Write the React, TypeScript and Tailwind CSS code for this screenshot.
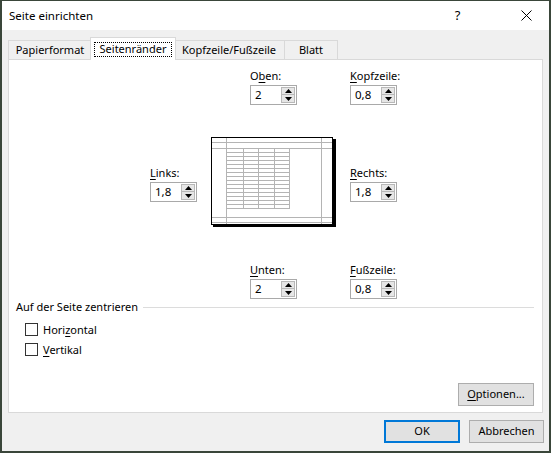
import React from "react";

const F = "font-['Noto_Sans',sans-serif]";

function Tri({ up }: { up?: boolean }) {
  return (
    <svg width="7" height="4" viewBox="0 0 7 4">
      {up ? <polygon points="0,4 7,4 3.5,0" fill="#000" /> : <polygon points="0,0 7,0 3.5,4" fill="#000" />}
    </svg>
  );
}

function Spin({ value }: { value: string }) {
  return (
    <div className="w-[47px] h-[20px] border border-[#a9a9a9] bg-white flex items-center">
      <span className="pl-[4px] text-[11.5px] leading-[14px] text-black">{value}</span>
      <div className="ml-auto mr-px h-full py-px flex flex-col">
        <div className="w-[14px] h-[8px] bg-[#e6e6e6] border border-[#b8b8b8] flex items-center justify-center">
          <Tri up />
        </div>
        <div className="w-[14px] h-[8px] bg-[#e6e6e6] border border-[#b8b8b8] border-t-0 flex items-center justify-center">
          <Tri />
        </div>
      </div>
    </div>
  );
}

function Field({ pre, u, post, value }: { pre: string; u: string; post: string; value: string }) {
  return (
    <div className="w-[47px] flex flex-col">
      <div className="h-[14px] leading-[14px] text-[11px] text-black whitespace-nowrap">
        {pre}
        <span className="underline underline-offset-2">{u}</span>
        {post}
      </div>
      <div className="mt-[2px]">
        <Spin value={value} />
      </div>
    </div>
  );
}

function Preview() {
  const rows = Array.from({ length: 16 }, (_, k) => 11.5 + 4 * k);
  const cols = [15.5, 32.5, 47.5, 63.5, 78.5];
  const g = "#b4b4b4";
  return (
    <svg width="127" height="92" viewBox="0 0 127 92">
      <rect x="2" y="2" width="123" height="88" fill="#000" />
      <rect x="0.5" y="0.5" width="121" height="87" fill="#fff" stroke="#000" />
      <line x1="15.5" y1="1" x2="15.5" y2="87" stroke={g} />
      <line x1="110.5" y1="1" x2="110.5" y2="87" stroke={g} />
      <line x1="1" y1="5.5" x2="121" y2="5.5" stroke={g} />
      <line x1="1" y1="11.5" x2="121" y2="11.5" stroke={g} />
      <line x1="1" y1="80.5" x2="121" y2="80.5" stroke={g} />
      <line x1="1" y1="85.5" x2="121" y2="85.5" stroke={g} />
      {rows.map((y) => (
        <line key={y} x1="15" y1={y} x2="79" y2={y} stroke={g} />
      ))}
      {cols.map((x) => (
        <line key={x} x1={x} y1="11" x2={x} y2="72" stroke={g} />
      ))}
    </svg>
  );
}

function Check({ pre, u, post }: { pre: string; u: string; post: string }) {
  return (
    <div className="h-[15px] flex items-center pl-[16px]">
      <div className="w-[13px] h-[13px] border border-[#333] bg-white" />
      <span className="ml-[5px] text-[11px] leading-[14px] text-black">
        {pre}
        <span className="underline underline-offset-2">{u}</span>
        {post}
      </span>
    </div>
  );
}

export default function App() {
  return (
    <div
      className={`${F} w-[551px] h-[453px] box-border flex flex-col bg-[#f0f0f0] border-l-2 border-r-2 border-t border-b-2 border-[#3a463a] overflow-hidden`}
    >
      {/* title bar */}
      <div className="h-[29px] bg-white flex items-center">
        <span className="pl-[7px] text-[11.5px] text-black">Seite einrichten</span>
        <div className="ml-auto flex h-full">
          <div className="w-[45px] mr-[24px] h-full flex items-center justify-center text-[13px] text-black">?</div>
          <div className="w-[45px] h-full flex items-center justify-center">
            <svg width="11" height="11" viewBox="0 0 11 11">
              <line x1="0.5" y1="0.5" x2="10.5" y2="10.5" stroke="#000" strokeWidth="1" />
              <line x1="10.5" y1="0.5" x2="0.5" y2="10.5" stroke="#000" strokeWidth="1" />
            </svg>
          </div>
        </div>
      </div>

      {/* tabs */}
      <div className="h-[29px] flex items-end pl-[6px] text-[11px] text-black">
        <div className="w-[84px] h-[19px] border border-b-0 border-[#d9d9d9] flex items-center justify-center">Papierformat</div>
        <div className="relative z-10 w-[86px] h-[23px] -mx-[2px] -mb-px bg-white border border-b-0 border-[#d9d9d9] flex items-start justify-center pt-[4px]">
          <div className="w-[78px] h-[15px] border border-dotted border-black flex items-center justify-center">Seitenränder</div>
        </div>
        <div className="w-[111px] h-[19px] border border-b-0 border-l-0 border-[#d9d9d9] flex items-center justify-center">Kopfzeile/Fußzeile</div>
        <div className="w-[53px] h-[19px] border border-b-0 border-l-0 border-[#d9d9d9] flex items-center justify-center">Blatt</div>
      </div>

      {/* panel */}
      <div className="ml-[6px] w-[535px] h-[354px] border border-[#d9d9d9] bg-white flex flex-col">
        <div className="flex pt-[9px] pl-[241px]">
          <Field pre="O" u="b" post="en:" value="2" />
          <div className="ml-[53px]">
            <Field pre="" u="K" post="opfzeile:" value="0,8" />
          </div>
        </div>

        <div className="mt-[32px] flex pl-[141px] h-[92px]">
          <div className="pt-[29px]">
            <Field pre="" u="L" post="inks:" value="1,8" />
          </div>
          <div className="ml-[14px]">
            <Preview />
          </div>
          <div className="ml-[12px] pt-[29px]">
            <Field pre="" u="R" post="echts:" value="1,8" />
          </div>
        </div>

        <div className="mt-[34px] flex pl-[241px]">
          <Field pre="" u="U" post="nten:" value="2" />
          <div className="ml-[53px]">
            <Field pre="" u="F" post="ußzeile:" value="0,8" />
          </div>
        </div>

        <div className="mt-[1px] h-[14px] flex items-center pl-[7px] pr-[8px]">
          <span className="text-[11px] leading-[14px] text-black whitespace-nowrap">Auf der Seite zentrieren</span>
          <div className="ml-[5px] flex-1 h-px bg-[#dcdcdc]" />
        </div>

        <div className="mt-[8px]">
          <Check pre="Hori" u="z" post="ontal" />
        </div>
        <div className="mt-[5px]">
          <Check pre="" u="V" post="ertikal" />
        </div>

        <div className="mt-[26px] flex justify-end pr-[8px]">
          <div className="w-[76px] h-[23px] bg-[#e1e1e1] border border-[#adadad] flex items-center justify-center text-[11px] text-black">
            <span className="underline underline-offset-2">O</span>ptionen...
          </div>
        </div>
      </div>

      {/* buttons */}
      <div className="mt-[7px] flex justify-end pr-[5px] gap-[9px]">
        <div className="w-[76px] h-[23px] bg-[#e1e1e1] border-2 border-[#0078d7] flex items-center justify-center text-[11px] text-black">OK</div>
        <div className="w-[75px] h-[23px] bg-[#e1e1e1] border border-[#adadad] flex items-center justify-center text-[11px] text-black">Abbrechen</div>
      </div>
    </div>
  );
}
